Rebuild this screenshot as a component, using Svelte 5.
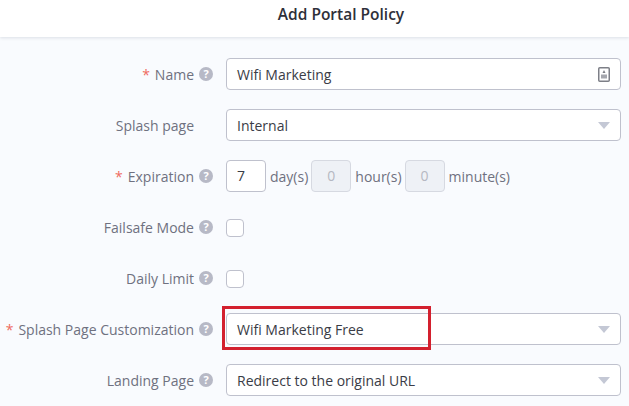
<script lang="ts">
	const landing = "Redirect to the original URL";
</script>

{#snippet help()}
	<span class="help">?</span>
{/snippet}

{#snippet caret()}
	<svg class="caret" width="12" height="7" viewBox="0 0 12 7"><path d="M0 0h12L6 7z" fill="#c4c8d5" /></svg>
{/snippet}

<div class="page">
	<header>Add Portal Policy</header>
	<form>
		<div class="row">
			<div class="label"><span class="req">*</span><span>Name</span>{@render help()}</div>
			<div class="field">
				<span>Wifi Marketing</span>
				<svg class="counter" width="12" height="15" viewBox="0 0 12 15">
					<rect x="0.75" y="0.75" width="10.5" height="13.5" rx="1" fill="#fff" stroke="#7d7f87" stroke-width="1.5" />
					<path d="M6 3l1.5 3h-3z" fill="#7d7f87" />
					<rect x="3" y="7.5" width="6" height="4" fill="#a5a7ae" />
				</svg>
			</div>
		</div>
		<div class="row">
			<div class="label nohelp"><span>Splash page</span></div>
			<div class="field"><span>Internal</span>{@render caret()}</div>
		</div>
		<div class="row">
			<div class="label"><span class="req">*</span><span>Expiration</span>{@render help()}</div>
			<div class="time">
				<div class="num">7</div>
				<span class="tight">day(s)</span>
				<div class="num off">0</div>
				<span class="tight">hour(s)</span>
				<div class="num off">0</div>
				<span>minute(s)</span>
			</div>
		</div>
		<div class="row">
			<div class="label"><span>Failsafe Mode</span>{@render help()}</div>
			<div class="check"></div>
		</div>
		<div class="row">
			<div class="label"><span>Daily Limit</span>{@render help()}</div>
			<div class="check"></div>
		</div>
		<div class="row">
			<div class="label"><span class="req">*</span><span>Splash Page Customization</span>{@render help()}</div>
			<div class="field"><span>Wifi Marketing Free</span>{@render caret()}</div>
			<div class="mark"></div>
		</div>
		<div class="row">
			<div class="label"><span>Landing Page</span>{@render help()}</div>
			<div class="field"><span>{landing}</span>{@render caret()}</div>
		</div>
	</form>
</div>

<style>
	:global(body) {
		margin: 0;
		background: #f9fbfe;
	}
	.page {
		height: 406px;
		overflow: hidden;
		font-family: "Open Sans", sans-serif;
		font-size: 14px;
		color: #6f7180;
		background: #f9fbfe;
	}
	header {
		height: 37px;
		padding-left: 53px;
		line-height: 29px;
		text-align: center;
		font-size: 15.5px;
		font-weight: 600;
		color: #2e3039;
		background: #fff;
		box-shadow: 0 1px 3px rgba(70, 80, 100, 0.16);
	}
	form {
		display: flex;
		flex-direction: column;
		gap: 19px;
		padding: 21px 8px 0 0;
	}
	.row {
		position: relative;
		display: flex;
		align-items: center;
		height: 32px;
	}
	.label {
		flex: 0 0 226px;
		display: flex;
		align-items: center;
		justify-content: flex-end;
		gap: 5px;
		padding-right: 13px;
		box-sizing: border-box;
		white-space: nowrap;
	}
	.nohelp {
		padding-right: 32px;
	}
	.req {
		color: #ef6a5f;
	}
	.help {
		width: 14px;
		height: 14px;
		border-radius: 50%;
		background: #b7b9c6;
		color: #fff;
		font-size: 11px;
		font-weight: 700;
		line-height: 14px;
		text-align: center;
	}
	.field {
		flex: 1;
		display: flex;
		align-items: center;
		justify-content: space-between;
		height: 32px;
		box-sizing: border-box;
		padding: 0 10px;
		border: 1px solid #bfc1cd;
		border-radius: 4px;
		background: #fff;
		color: #3a3c46;
	}
	.time {
		display: flex;
		align-items: center;
		gap: 4px;
	}
	.tight {
		margin-right: -1px;
	}
	.num {
		width: 40px;
		height: 32px;
		box-sizing: border-box;
		padding-left: 10px;
		line-height: 30px;
		border: 1px solid #bfc1cd;
		border-radius: 4px;
		background: #fff;
		color: #3a3c46;
	}
	.num.off {
		padding-left: 0;
		text-align: center;
		background: #eef1f6;
		border-color: #d6d9e1;
		color: #b5b8c2;
	}
	.check {
		width: 18px;
		height: 18px;
		margin-top: 2px;
		box-sizing: border-box;
		border: 1px solid #bfc1cd;
		border-radius: 4px;
		background: #fff;
	}
	.mark {
		position: absolute;
		left: 222px;
		top: -7px;
		width: 209px;
		height: 44px;
		box-sizing: border-box;
		border: 3px solid #d3202e;
	}
</style>
